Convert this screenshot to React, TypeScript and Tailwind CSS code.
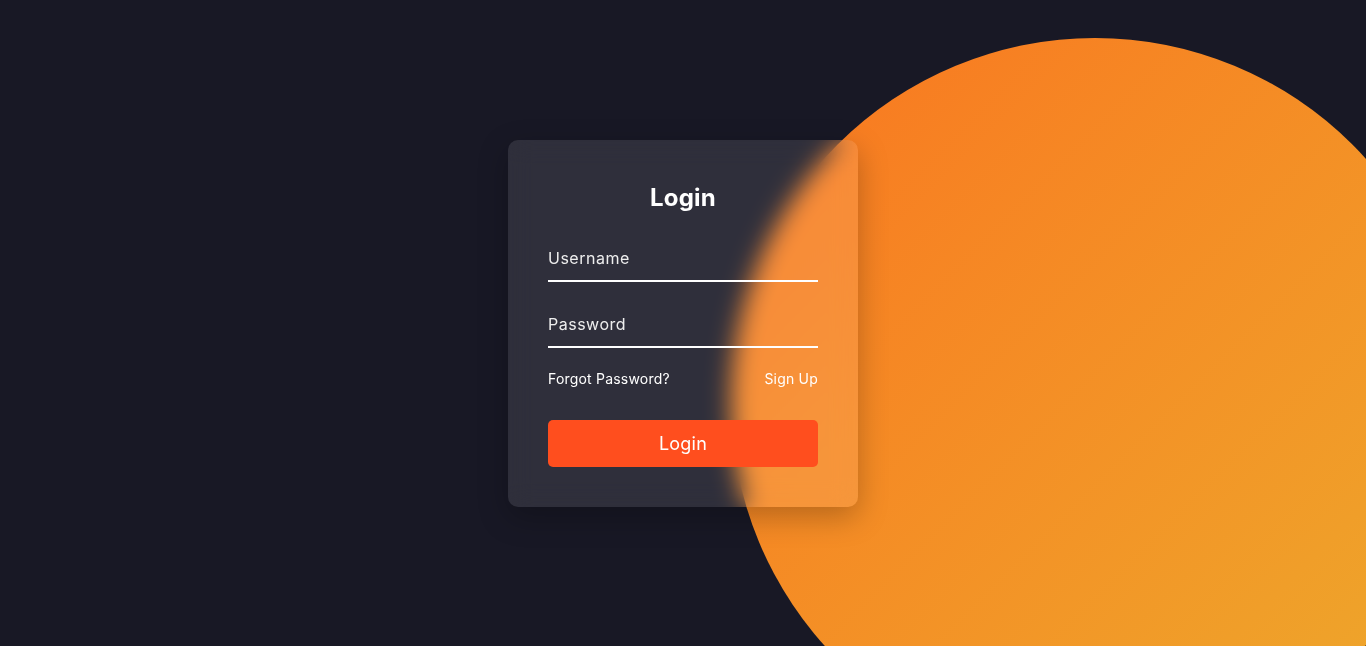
export default function App() {
  return (
    <div className="relative flex h-[646px] w-full items-center justify-center overflow-hidden bg-[#181825] font-['Inter',sans-serif]">
      <div className="absolute left-[731px] top-[38px] h-[728px] w-[728px] rounded-full bg-linear-to-br from-[#f97520] to-[#ecaa2c]" />
      <form className="relative flex w-[350px] flex-col rounded-[10px] bg-white/10 px-10 pt-10 pb-10 shadow-[0_10px_30px_rgba(0,0,0,0.25)] backdrop-blur-md">
        <h1 className="text-center text-[24px] font-bold leading-9 tracking-[0.2px] text-white">Login</h1>
        <input
          type="text"
          placeholder="Username"
          className="mt-5 h-[46px] w-full border-b-2 border-white bg-transparent text-[16px] tracking-[0.5px] text-white outline-none placeholder:text-[#eeeeee]"
        />
        <input
          type="password"
          placeholder="Password"
          className="mt-5 h-[46px] w-full border-b-2 border-white bg-transparent text-[16px] tracking-[0.5px] text-white outline-none placeholder:text-[#eeeeee]"
        />
        <div className="mt-5 flex items-center justify-between text-[14px] leading-[22px] tracking-[0.2px] text-white">
          <a href="#">Forgot Password?</a>
          <a href="#">Sign Up</a>
        </div>
        <button
          type="button"
          className="mt-[30px] h-[47px] w-full rounded-[5px] bg-[#ff4e1e] text-[18px] tracking-[0.2px] text-white"
        >
          Login
        </button>
      </form>
    </div>
  );
}
